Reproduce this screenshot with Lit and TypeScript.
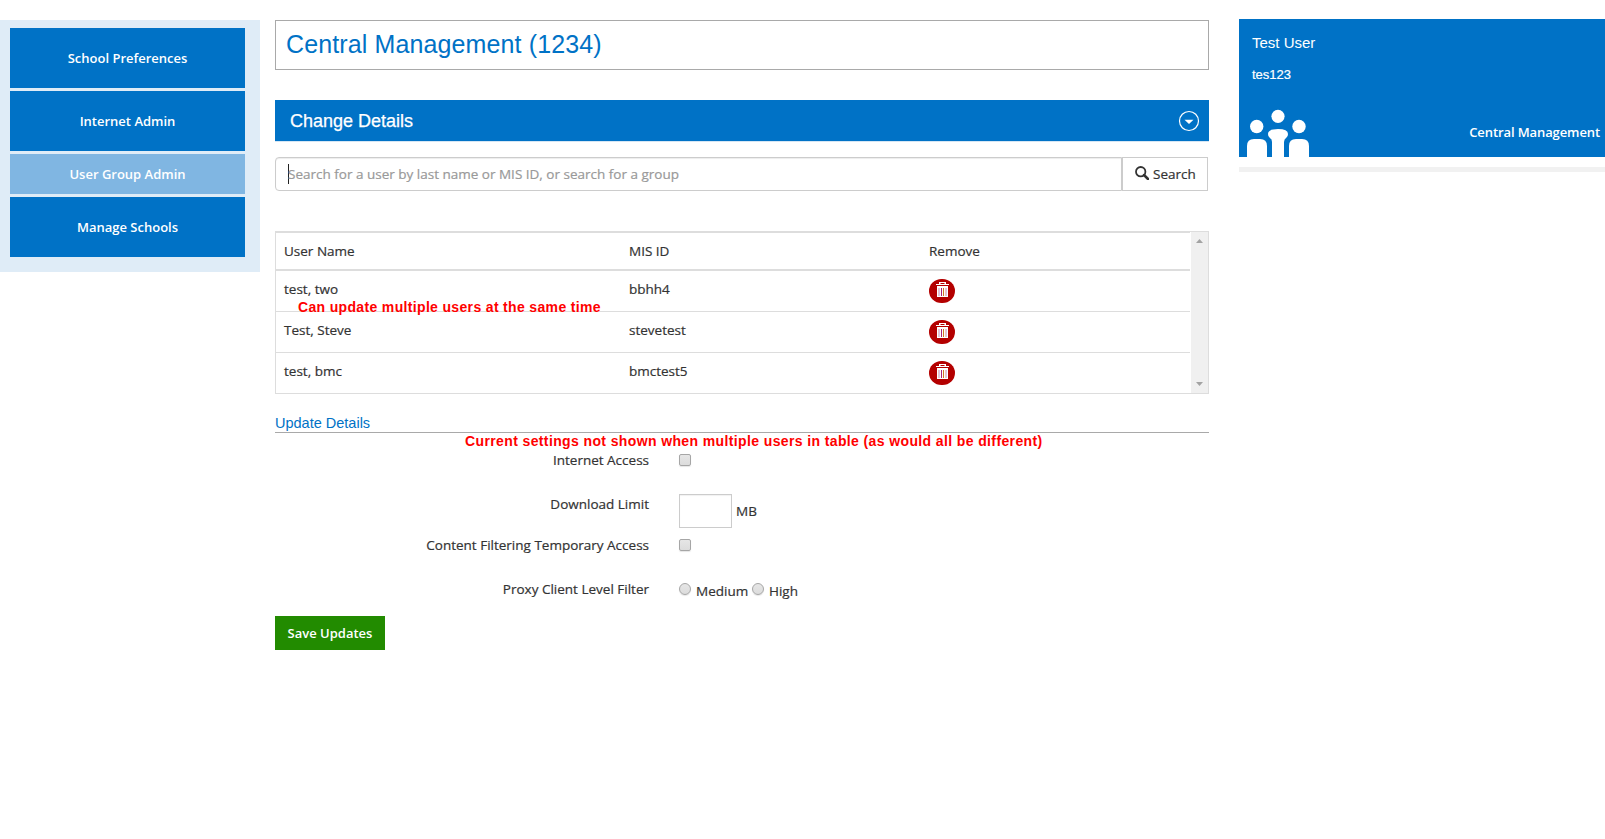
import { LitElement, html, css, svg } from "lit";

class AppRoot extends LitElement {
  static properties = { menu: { state: true }, users: { state: true } };

  menu = [
    { label: "School Preferences", active: false },
    { label: "Internet Admin", active: false },
    { label: "User Group Admin", active: true },
    { label: "Manage Schools", active: false },
  ];
  users = [
    { name: "test, two", id: "bbhh4" },
    { name: "Test, Steve", id: "stevetest" },
    { name: "test, bmc", id: "bmctest5" },
  ];

  static styles = css`
    :host {
      display: block;
      position: relative;
      height: 839px;
      overflow: hidden;
      background: #fff;
      color: #333;
      font: 13.5px/20px "Open Sans", "Noto Sans", sans-serif;
    }
    * { box-sizing: border-box; }
    svg { display: block; }
    .page { display: flex; align-items: flex-start; }

    .side {
      width: 260px; height: 252px; margin-top: 20px;
      padding: 8px 15px 0 10px;
      background: #dfecf7;
      display: flex; flex-direction: column; gap: 3px;
    }
    .item {
      height: 60px; background: #0072c6; color: #fff;
      font-size: 13px; font-weight: 600;
      display: flex; align-items: center; justify-content: center;
    }
    .item.active { height: 40px; background: #80b6e2; }

    .main { width: 934px; margin: 20px 0 0 15px; display: flex; flex-direction: column; }
    .title {
      margin: 0; height: 50px; border: 1px solid #a9a9a9; padding-left: 10px;
      font: 25px/46px "Liberation Sans", Arial, sans-serif;
      letter-spacing: 0.12px; color: #0072c6;
    }
    .bar {
      margin-top: 30px; height: 42px; background: #0072c6; border-bottom: 1px solid #d5e6f4;
      padding: 1px 9px 0 15px; color: #fff;
      display: flex; align-items: center; justify-content: space-between;
      font: 18px/40px "Liberation Sans", Arial, sans-serif;
      -webkit-text-stroke: 0.25px #fff;
    }
    .search, .grid, .form { -webkit-text-stroke: 0.2px currentColor; }
    .search { display: flex; width: 933px; height: 34px; margin-top: 15px; }
    .field {
      width: 847px; border: 1px solid #ccc; border-radius: 4px 0 0 4px;
      box-shadow: inset 0 1px 1px rgba(0, 0, 0, 0.075);
      padding: 6px 0 6px 12px; display: flex; align-items: center; color: #999;
    }
    .caret { width: 1px; height: 20px; background: #222; margin-right: -1px; }
    .go {
      flex: 1; border: 1px solid #ccc; display: flex; align-items: center;
      gap: 4px; padding-left: 12px;
    }
    .go svg { margin-top: -3px; }

    .grid {
      margin-top: 40px; height: 163px; border: 1px solid #ddd; display: flex;
    }
    .rows { width: 914px; }
    .row {
      display: grid; grid-template-columns: 345px 300px 1fr;
      height: 41px; border-bottom: 1px solid #ddd; padding: 8px 0 0 8px;
    }
    .row.head { height: 39px; border-top: 1px solid #ddd; border-bottom-width: 2px; }
    .row:last-child { border-bottom: 0; }
    .track {
      width: 17px; margin-left: 1px; background: #f0f0f0;
      display: flex; flex-direction: column; justify-content: space-between;
      align-items: center; padding: 7px 0;
    }

    .sub {
      margin-top: 17px; height: 22px; border-bottom: 1px solid #a9a9a9;
      font: 14.5px/24px "Liberation Sans", Arial, sans-serif; color: #0072c6;
    }
    .form { display: flex; flex-direction: column; }
    .line { display: flex; align-items: flex-start; gap: 30px; }
    .label { width: 374px; text-align: right; }
    .l1 { height: 61px; padding-top: 17px; }
    .l2 { height: 41px; }
    .l3 { height: 44px; }
    .l4 { height: 37px; }
    .check {
      width: 12px; height: 12px; border: 1px solid #a6a6a6; border-radius: 2px;
      background: linear-gradient(#e6e6e6, #dcdcdc); margin-top: 4px;
      box-shadow: 0 1px 1px rgba(0, 0, 0, 0.1);
    }
    .l3 .check { margin-top: 4px; }
    .radio { border-radius: 50%; }
    .limit { display: flex; gap: 4px; }
    .box { width: 53px; height: 34px; border: 1px solid #ccc; box-shadow: inset 0 1px 1px rgba(0, 0, 0, 0.06); }
    .unit { padding-top: 7px; }
    .opts { display: flex; }
    .opt { padding: 2px 0 0 5px; }
    .opt.first { width: 61px; }
    .save {
      width: 110px; height: 34px; background: #228b00; color: #fff;
      font-size: 13px; font-weight: 600; line-height: 34px; text-align: center;
    }

    .aside { width: 366px; margin: 19px 0 0 30px; }
    .card { height: 138px; background: #0072c6; color: #fff; display: flex; flex-direction: column; }
    .who { padding: 14px 0 0 13px; font: 15px/20px "Liberation Sans", Arial, sans-serif; }
    .login { padding: 12px 0 0 13px; font: 13px/20px "Liberation Sans", Arial, sans-serif; -webkit-text-stroke: 0.2px #fff; }
    .foot { flex: 1; display: flex; justify-content: space-between; align-items: flex-end; padding: 0 5px 0 8px; }
    .org { font-size: 13px; font-weight: 600; letter-spacing: -0.1px; padding-bottom: 15px; }
    .rule { height: 5px; margin-top: 10px; background: #f1f1f1; }

    .note {
      position: absolute; white-space: nowrap; color: #f00;
      font: bold 14px/20px "Liberation Sans", Arial, sans-serif;
    }
    .n1 { left: 298px; top: 297px; letter-spacing: 0.34px; }
    .n2 { left: 465px; top: 431px; letter-spacing: 0.38px; }
  `;

  trash() {
    return svg`<svg width="26" height="24" viewBox="0 0 26 24">
      <rect width="26" height="24" rx="12.5" ry="12" fill="#b40000"/>
      <path d="M10 5V3h7v2h-1.500V4h-4v1zM7 5h13v1H7z" fill="#fff"/>
      <path d="M8 7h11v11H8z" fill="#fff"/>
      <path d="M9.500 9v8M16.500 9v8" stroke="#ecc6c6" fill="none"/>
      <path d="M12.500 9v8" stroke="#a8207a" fill="none"/>
      <path d="M14.500 9v8" stroke="#d07820" fill="none"/>
      <path d="M10.500 9v8M17.500 9v8" stroke="#d9c6e6" fill="none"/>
    </svg>`;
  }

  render() {
    return html`
      <div class="page">
        <nav class="side">
          ${this.menu.map((m) => html`<div class="item ${m.active ? "active" : ""}">${m.label}</div>`)}
        </nav>
        <main class="main">
          <h1 class="title">Central Management (1234)</h1>
          <div class="bar">
            <span>Change Details</span>
            <svg width="22" height="22" viewBox="0 0 22 22">
              <circle cx="11" cy="11" r="9.500" fill="none" stroke="#fff" stroke-width="1.200"/>
              <path d="M6.500 9.700h9L11 14z" fill="#fff"/>
            </svg>
          </div>
          <div class="search">
            <div class="field"><span class="caret"></span>Search for a user by last name or MIS ID, or search for a group</div>
            <div class="go">
              <svg width="14" height="14" viewBox="0 0 14 14" fill="none" stroke="#333">
                <circle cx="5.700" cy="5.700" r="4.700" stroke-width="1.800"/>
                <path d="M9 9l4 4" stroke-width="2.500" stroke-linecap="round"/>
              </svg>
              <span>Search</span>
            </div>
          </div>
          <div class="grid">
            <div class="rows">
              <div class="row head"><span>User Name</span><span>MIS ID</span><span>Remove</span></div>
              ${this.users.map((u) => html`<div class="row"><span>${u.name}</span><span>${u.id}</span><span>${this.trash()}</span></div>`)}
            </div>
            <div class="track">
              <svg width="7" height="4"><path d="M3.500 0L7 4H0z" fill="#a3a3a3"/></svg>
              <svg width="7" height="4"><path d="M0 0h7L3.500 4z" fill="#a3a3a3"/></svg>
            </div>
          </div>
          <div class="sub">Update Details</div>
          <div class="form">
            <div class="line l1"><span class="label">Internet Access</span><span class="check"></span></div>
            <div class="line l2"><span class="label">Download Limit</span>
              <span class="limit"><span class="box"></span><span class="unit">MB</span></span></div>
            <div class="line l3"><span class="label">Content Filtering Temporary Access</span><span class="check"></span></div>
            <div class="line l4"><span class="label">Proxy Client Level Filter</span>
              <span class="opts"><span class="check radio"></span><span class="opt first">Medium</span><span class="check radio"></span><span class="opt">High</span></span></div>
          </div>
          <div class="save">Save Updates</div>
        </main>
        <aside class="aside">
          <div class="card">
            <div class="who">Test User</div>
            <div class="login">tes123</div>
            <div class="foot">
              <svg width="62" height="48" viewBox="0 0 62 48" fill="#fff">
                <circle cx="31" cy="7.300" r="6.600"/>
                <circle cx="9.700" cy="17.500" r="6.700"/>
                <circle cx="52" cy="17.500" r="6.700"/>
                <path d="M0 48V37q0-7 7-7h6q7 0 7 7v11zM42 48V37q0-7 7-7h6q7 0 7 7v11z"/>
                <path d="M25 48V33q0-3-2.500-4.500Q21 27.500 21 25q0-5 10-5t10 5q0 2.500-1.500 3.500Q37 30 37 33v15z"/>
              </svg>
              <span class="org">Central Management</span>
            </div>
          </div>
          <div class="rule"></div>
        </aside>
      </div>
      <div class="note n1">Can update multiple users at the same time</div>
      <div class="note n2">Current settings not shown when multiple users in table (as would all be different)</div>
    `;
  }
}
customElements.define("app-root", AppRoot);
